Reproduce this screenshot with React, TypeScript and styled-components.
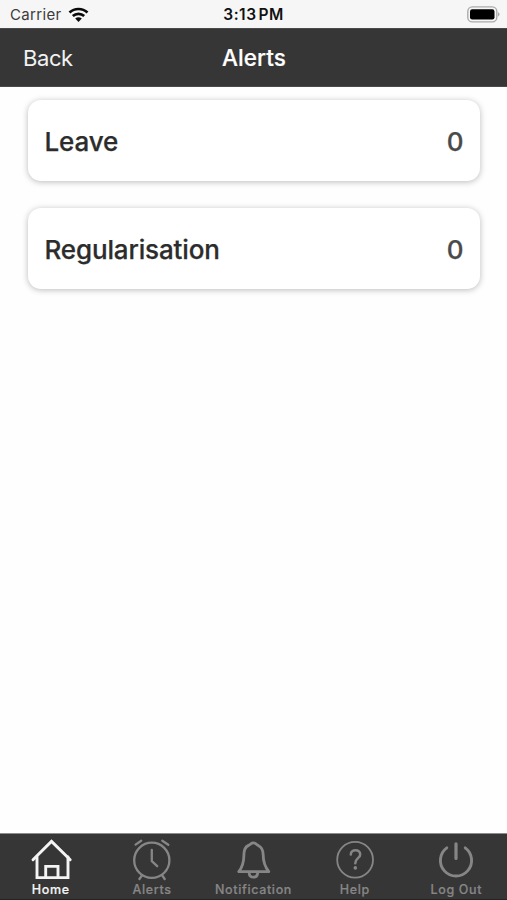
import React from "react";
import styled, { createGlobalStyle } from "styled-components";

const GlobalStyle = createGlobalStyle`
  body {
    margin: 0;
    background: #fefefe;
    font-family: Inter, "Liberation Sans", sans-serif;
  }
`;

const Screen = styled.div`
  display: flex;
  flex-direction: column;
  height: 100vh;
  overflow: hidden;
  background: #fefefe;
`;

const StatusBar = styled.div`
  display: grid;
  grid-template-columns: 1fr auto 1fr;
  align-items: center;
  height: 28px;
  box-sizing: border-box;
  padding: 1px 7px 0 10px;
  background: #f6f6f6;
  color: #111;
`;

const Carrier = styled.div`
  display: flex;
  align-items: center;
  gap: 6px;
  font-size: 15px;
  letter-spacing: 0.35px;
  color: #3c3c3c;
`;

const Clock = styled.div`
  margin-left: -3px;
  font-size: 15.5px;
  font-weight: 600;
  letter-spacing: 0.5px;
  word-spacing: -2.5px;
`;

const BatterySlot = styled.div`
  display: flex;
  justify-content: flex-end;
`;

const Header = styled.header`
  display: grid;
  grid-template-columns: 1fr auto 1fr;
  align-items: center;
  height: 59px;
  box-sizing: border-box;
  padding: 0 22px 0 23px;
  background: #363636;
  border-top: 1px solid #4a4a4a;
  border-bottom: 1px solid #4a4a4a;
  color: #fff;
`;

const BackButton = styled.button`
  justify-self: start;
  padding: 0;
  border: 0;
  background: none;
  font: inherit;
  font-size: 22px;
  letter-spacing: -0.4px;
  color: #f2f2f2;
`;

const Title = styled.h1`
  margin: 0;
  font-size: 22.5px;
  font-weight: 500;
  letter-spacing: 0.1px;
  -webkit-text-stroke: 0.2px currentColor;
`;

const CardList = styled.main`
  flex: 1;
  display: flex;
  flex-direction: column;
  gap: 27px;
  padding: 13px 27px 0 27.5px;
`;

const Card = styled.section`
  display: flex;
  align-items: center;
  justify-content: space-between;
  height: 81px;
  box-sizing: border-box;
  padding: 2px 16.5px 0 17px;
  border-radius: 13px;
  background: #fff;
  box-shadow: 0 1px 6px rgba(0, 0, 0, 0.27);
`;

const CardLabel = styled.span`
  font-size: 26px;
  font-weight: 500;
  letter-spacing: -0.15px;
  color: #2c2c2c;
  -webkit-text-stroke: 0.25px currentColor;
`;

const CardCount = styled.span`
  font-size: 26px;
  font-weight: 500;
  color: #4a4a4a;
  -webkit-text-stroke: 0.25px currentColor;
`;

const TabBar = styled.nav`
  display: grid;
  grid-template-columns: repeat(5, 1fr);
  height: 67px;
  box-sizing: border-box;
  padding-top: 4px;
  background: #363636;
  border-top: 1px solid #8c8c8c;
  border-bottom: 1px solid #242424;
`;

const Tab = styled.div<{ $active?: boolean }>`
  display: flex;
  flex-direction: column;
  align-items: center;
  font-size: 12.5px;
  font-weight: 500;
  line-height: 16px;
  letter-spacing: 0.65px;
  color: ${(p) => (p.$active ? "#f4f4f4" : "#868686")};
  -webkit-text-stroke: 0.2px currentColor;
`;

const TabIcon = styled.svg`
  display: block;
  width: 44px;
  height: 44px;
  fill: none;
  stroke: currentColor;
  stroke-width: 2.3;
  stroke-linecap: round;
  stroke-linejoin: round;
`;

const WifiIcon = () => (
  <svg width="21" height="16" viewBox="0 0 21 16" fill="none" stroke="#0a0a0a" strokeWidth="2.7">
    <path d="M1.5 5.6C6.6.8 14.4.8 19.5 5.6" />
    <path d="M4.8 9.1C8 6.2 13 6.2 16.2 9.1" />
    <path d="M7.2 11.5C9 9.8 12 9.8 13.8 11.5L10.5 14.9Z" fill="#0a0a0a" stroke="none" />
  </svg>
);

const BatteryIcon = () => (
  <svg width="33" height="17" viewBox="0 0 33 17">
    <rect x="0.8" y="0.9" width="29" height="15" rx="4.5" fill="#f6f6f6" stroke="#aaa" strokeWidth="1.4" />
    <rect x="3" y="3.3" width="24.5" height="10.2" rx="2.2" fill="#000" />
    <path d="M31.2 6.3C32.9 7 32.9 9.8 31.2 10.5Z" fill="#999" />
  </svg>
);

const tabs = [
  {
    label: "Home",
    active: true,
    icon: (
      <g strokeWidth="2.9" strokeLinejoin="miter">
        <path d="M4 21.7 22.5 3.4 41.2 21.7" />
        <path d="M8 19V39.6H16.7V28.4H29V39.6H39V19M16.7 39.6H29" />
      </g>
    ),
  },
  {
    label: "Alerts",
    icon: (
      <>
        <circle cx="21.8" cy="22.3" r="17.6" />
        <path d="M21.8 11.8V23.2L27.2 28.2M5.6 6.6 11.2 2.7M32.3 2.7 38.3 6.8M12 37.3 9.4 41M32.2 37.3 34.7 41" />
      </>
    ),
  },
  {
    label: "Notification",
    icon: (
      <g strokeWidth="2.8">
        <path d="M22.4 4.9C19.8 4.9 20 6.4 17.5 7.4C13.8 9 12.9 12.7 12.9 17C12.9 24.5 11.8 28.5 7.8 33.7H37.8C33.7 28.5 32.2 24.5 32.2 17C32.2 12.7 30.7 9 27.2 7.4C24.8 6.4 25 4.9 22.4 4.9Z" />
        <path d="M18.2 35.3C18.7 40.5 26.1 40.5 26.6 35.3" />
      </g>
    ),
  },
  {
    label: "Help",
    icon: (
      <>
        <circle cx="22.1" cy="21.7" r="17.9" strokeWidth="1.8" />
        <path d="M17.8 16.4C17.8 10.8 27.2 10.8 27.2 16.4C27.2 20.4 22.3 20 22.3 25.2" strokeWidth="2.5" />
        <circle cx="22.3" cy="29.9" r="1.8" fill="currentColor" stroke="none" />
      </>
    ),
  },
  {
    label: "Log Out",
    icon: (
      <g strokeWidth="2.9">
        <path d="M12.8 9.8A15.6 15.6 0 1 0 31.2 9.8" />
        <path d="M22 5.8V20.5" strokeWidth="3.2" />
      </g>
    ),
  },
];

const alerts = [
  { label: "Leave", count: 0 },
  { label: "Regularisation", count: 0 },
];

export default function App() {
  return (
    <>
      <GlobalStyle />
      <Screen>
        <StatusBar>
          <Carrier>
            Carrier <WifiIcon />
          </Carrier>
          <Clock>3:13 PM</Clock>
          <BatterySlot>
            <BatteryIcon />
          </BatterySlot>
        </StatusBar>
        <Header>
          <BackButton>Back</BackButton>
          <Title>Alerts</Title>
        </Header>
        <CardList>
          {alerts.map((a) => (
            <Card key={a.label}>
              <CardLabel>{a.label}</CardLabel>
              <CardCount>{a.count}</CardCount>
            </Card>
          ))}
        </CardList>
        <TabBar>
          {tabs.map((t) => (
            <Tab key={t.label} $active={t.active}>
              <TabIcon viewBox="0 0 44 44">{t.icon}</TabIcon>
              {t.label}
            </Tab>
          ))}
        </TabBar>
      </Screen>
    </>
  );
}
